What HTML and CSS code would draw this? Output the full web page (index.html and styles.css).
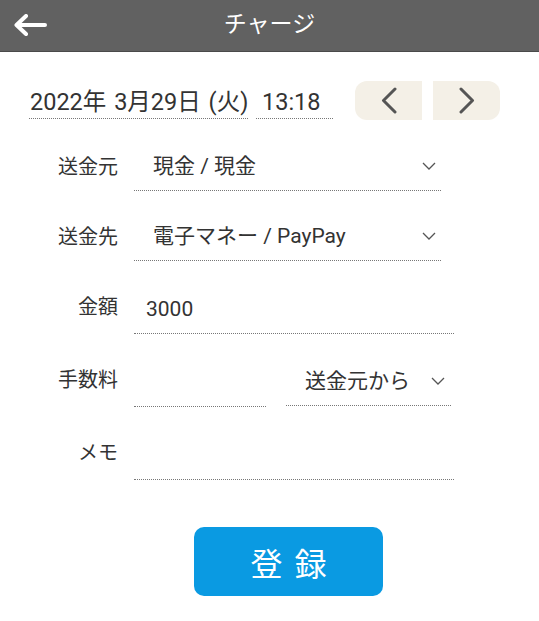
FILE: index.html
```html
<!DOCTYPE html>
<html lang="ja">
<head>
<meta charset="utf-8">
<title>チャージ</title>
<link rel="stylesheet" href="styles.css">
</head>
<body>
<header class="appbar">
  <span class="back" aria-label="戻る">
    <svg width="34" height="22" viewBox="0 0 34 22"><path d="M32 11H4M13 2L3.5 11L13 20" fill="none" stroke="#fff" stroke-width="4" stroke-linecap="round" stroke-linejoin="round"/></svg>
  </span>
  <h1 class="title">チャージ</h1>
</header>

<main class="content">
  <div class="daterow">
    <span class="datefield date">2022年 3月29日 (火)</span>
    <span class="datefield time">13:18</span>
    <div class="navbtns">
      <button class="nav prev" aria-label="前日">
        <svg width="16" height="27" viewBox="0 0 16 27"><path d="M14 2L2.5 13.5L14 25" fill="none" stroke="#555" stroke-width="3" stroke-linecap="round" stroke-linejoin="round"/></svg>
      </button>
      <button class="nav next" aria-label="翌日">
        <svg width="16" height="27" viewBox="0 0 16 27"><path d="M2 2L13.5 13.5L2 25" fill="none" stroke="#555" stroke-width="3" stroke-linecap="round" stroke-linejoin="round"/></svg>
      </button>
    </div>
  </div>

  <div class="form">
    <label class="label">送金元</label>
    <div class="select wide">
      <span class="val">現金 / 現金</span>
      <svg class="chev" width="14" height="8" viewBox="0 0 14 8"><path d="M1 1L7 7L13 1" fill="none" stroke="#555" stroke-width="1.3"/></svg>
    </div>

    <label class="label">送金先</label>
    <div class="select wide">
      <span class="val">電子マネー / PayPay</span>
      <svg class="chev" width="14" height="8" viewBox="0 0 14 8"><path d="M1 1L7 7L13 1" fill="none" stroke="#555" stroke-width="1.3"/></svg>
    </div>

    <label class="label">金額</label>
    <div class="input full"><span class="val">3000</span></div>

    <label class="label">手数料</label>
    <div class="feerow">
      <div class="input fee"><span class="val"></span></div>
      <div class="select feesel">
        <span class="val">送金元から</span>
        <svg class="chev" width="14" height="8" viewBox="0 0 14 8"><path d="M1 1L7 7L13 1" fill="none" stroke="#555" stroke-width="1.3"/></svg>
      </div>
    </div>

    <label class="label">メモ</label>
    <div class="input full"><span class="val"></span></div>
  </div>

  <button class="submit">登録</button>
</main>
</body>
</html>
```

FILE: styles.css
```css
* { box-sizing: border-box; }
html, body { margin: 0; padding: 0; background: #fff; }
body {
  font-family: "Roboto", "Noto Sans CJK JP", sans-serif;
  color: #333;
  width: 539px;
}

.appbar {
  height: 52px;
  background: #616161;
  border-bottom: 1px solid #4a4a4a;
  display: flex;
  align-items: center;
  justify-content: center;
  position: relative;
}
.back {
  position: absolute;
  left: 13px;
  top: 14px;
  width: 34px;
  height: 22px;
  display: block;
}
.back svg { display: block; }
.title {
  margin: 0;
  font-size: 23px;
  font-weight: 400;
  color: #fff;
  line-height: 28px;
  margin-top: -2px;
}

.content { padding: 0; }

.daterow {
  display: flex;
  align-items: flex-end;
  margin-top: 29px;
  padding-left: 29px;
  height: 39px;
}
.datefield {
  font-size: 23.5px;
  line-height: 30px;
  padding-bottom: 1px;
  border-bottom: 1px dotted #777;
  margin-bottom: 1px;
  white-space: nowrap;
}
.date { width: 219px; padding-left: 1px; word-spacing: 2px; }
.time { width: 77px; margin-left: 8px; padding-left: 6px; }

.navbtns {
  display: flex;
  gap: 11px;
  margin-left: 22px;
  height: 39px;
}
.nav {
  width: 67px;
  height: 39px;
  border: 0;
  padding: 0;
  background: #f4f0e7;
  display: flex;
  align-items: center;
  justify-content: center;
}
.nav svg { display: block; }
.prev { border-radius: 12px 0 0 12px; }
.next { border-radius: 0 12px 12px 0; }

.form {
  display: grid;
  grid-template-columns: 118px auto;
  column-gap: 16px;
  row-gap: 23px;
  margin-top: 24px;
  justify-content: start;
  align-items: start;
}
.label {
  text-align: right;
  font-size: 20px;
  line-height: 28px;
  padding-top: 9px;
  white-space: nowrap;
}
.val {
  font-size: 21px;
  line-height: 28px;
  white-space: nowrap;
  display: block;
  min-height: 28px;
}
.select {
  display: flex;
  align-items: center;
  justify-content: space-between;
  height: 47px;
  padding: 8px 5px 10px 19px;
  border-bottom: 1px dotted #777;
}
.select .val { flex: 1; }
.chev { display: block; flex: none; }
.wide { width: 307px; }
.input {
  height: 50px;
  padding: 11px 12px 10px 12px;
  border-bottom: 1px dotted #777;
}
.full { width: 320px; }
.feerow {
  display: flex;
  align-items: flex-end;
  gap: 20px;
}
.fee { width: 132px; }
.feesel { width: 165px; padding-right: 6px; margin-bottom: 1px; }

.submit {
  display: block;
  margin: 47px 0 0 194px;
  width: 189px;
  height: 69px;
  border: 0;
  border-radius: 10px;
  background: #0a9ae2;
  color: #fff;
  font-family: "Noto Sans CJK JP", sans-serif;
  font-size: 32px;
  letter-spacing: 12px;
  padding: 0 0 0 12px;
  line-height: 1;
}
```
